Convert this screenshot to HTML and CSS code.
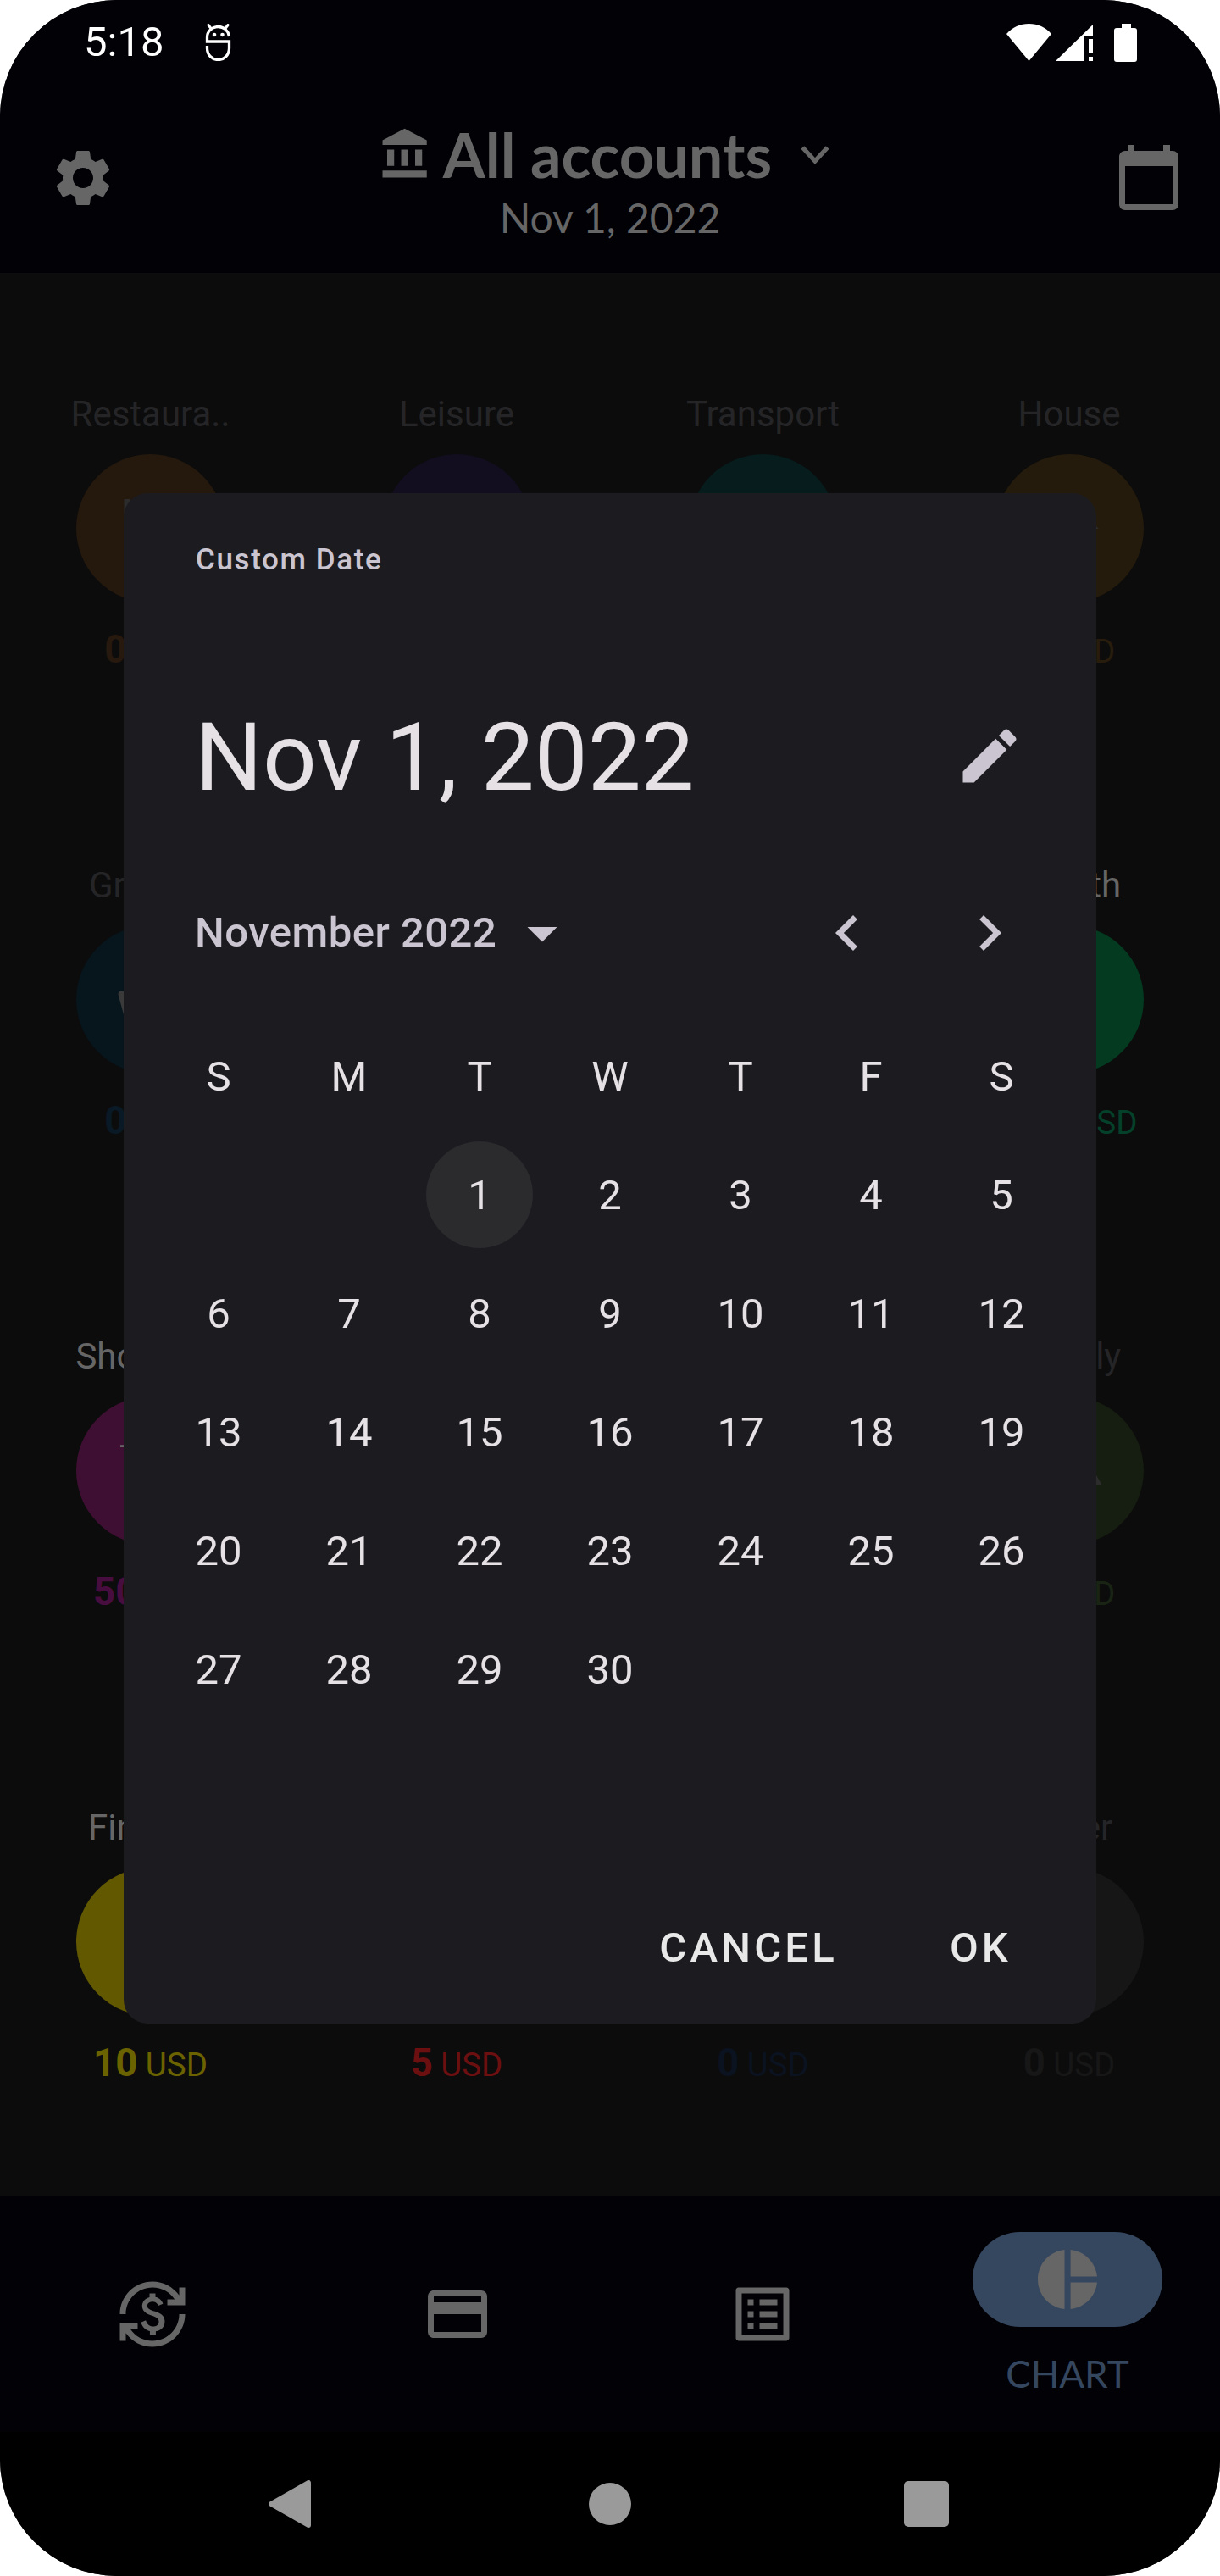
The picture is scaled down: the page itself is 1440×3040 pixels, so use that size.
FILE: index.html
```html
<!DOCTYPE html>
<html lang="en">
<head>
<meta charset="utf-8">
<title>Custom Date</title>
<link rel="stylesheet" href="styles.css">
</head>
<body>
<div class="phone">
  <header class="top">
    <div class="status">
      <span class="time">5:18</span>
      <svg class="android" viewBox="0 0 31 44"><path class="android-line" d="M28.5 15C27.5 8 22 3.5 15.5 3.5 8 3.5 2.5 9 2.5 16v5h26v8c0 8-6 13.5-13 13.500S2.500 37 2.500 29v-3"/><path class="android-line thin" d="M4 1.500l3 4M27 1.500l-3 4"/><circle cx="11" cy="13" r="2.300"/><circle cx="20.500" cy="13" r="2.300"/></svg>
      <div class="status-right">
        <svg class="wifi" viewBox="0 0 53 44"><path d="M26.500 44 0 12C7 4 16 0 26.500 0S46 4 53 12z"/></svg>
        <svg class="signal" viewBox="0 0 44 43"><path d="M44 0v14H33v29H0z"/><rect x="39" y="17" width="5" height="17"/><rect x="39" y="38" width="5" height="5"/></svg>
        <svg class="battery" viewBox="0 0 27 45"><path d="M9 0h11v5H9z"/><rect y="5" width="27" height="40" rx="3"/></svg>
      </div>
    </div>
    <div class="appbar">
      <svg class="gear" viewBox="0 0 24 24"><path d="M19.140 12.940c.04-.3.060-.61.060-.94 0-.32-.020-.64-.070-.94l2.030-1.580c.18-.14.230-.41.120-.61l-1.920-3.320c-.12-.22-.37-.29-.59-.22l-2.390.96c-.5-.38-1.030-.7-1.620-.94l-.36-2.540c-.04-.24-.24-.41-.48-.41h-3.840c-.24 0-.43.170-.47.410l-.36 2.540c-.59.24-1.130.57-1.620.94l-2.390-.96c-.22-.080-.47 0-.59.22L2.740 8.870c-.12.21-.080.47.120.61l2.030 1.580c-.05.3-.09.63-.09.94s.020.64.070.94l-2.030 1.580c-.18.14-.23.41-.12.61l1.920 3.320c.12.22.37.29.59.22l2.390-.96c.5.38 1.030.7 1.620.94l.36 2.540c.05.24.24.41.48.41h3.840c.24 0 .44-.17.47-.41l.36-2.540c.59-.24 1.130-.56 1.620-.94l2.390.96c.22.080.47 0 .59-.22l1.920-3.320c.12-.22.070-.47-.12-.61l-2.010-1.580zM12 15.600c-1.980 0-3.600-1.620-3.600-3.600s1.620-3.600 3.600-3.600 3.600 1.620 3.600 3.600-1.620 3.600-3.600 3.600z"/></svg>
      <div class="titles">
        <div class="title-row">
          <svg class="bank" viewBox="0 0 24 24"><path d="M4 10v7h3v-7H4zm6 0v7h3v-7h-3zM2 22h19v-3H2v3zm14-12v7h3v-7h-3zm-4.500-9L2 6v2h19V6l-9.500-5z"/></svg>
          <span class="title">All accounts</span>
          <svg class="expand" viewBox="0 0 24 24"><path d="M6.500 9l5.500 6 5.500-6"/></svg>
        </div>
        <div class="subtitle">Nov 1, 2022</div>
      </div>
      <svg class="cal" viewBox="0 0 70 77"><path fill-rule="evenodd" d="M10 0h7v7h35V0h8v7h3c4 0 7 3 7 7v56c0 4-3 7-7 7H7c-4 0-7-3-7-7V14c0-4 3-7 7-7h3zM7 25v45h56V25z"/></svg>
    </div>
  </header>

  <main class="cats">
    <div class="cat">
      <div class="cat-label dim">Restaura..</div>
      <div class="circle c-rest"><svg class="cat-icon i1" viewBox="0 0 24 24"><path d="M11 9H9V2H7v7H5V2H3v7c0 2.120 1.660 3.840 3.750 3.970V22h2.500v-9.030C11.340 12.840 13 11.120 13 9V2h-2v7zm5-3v8h2.500v8H21V2c-2.760 0-5 2.240-5 4z"/></svg></div>
      <div class="amount a-rest"><b>0</b> USD</div>
    </div>
    <div class="cat">
      <div class="cat-label dim">Leisure</div>
      <div class="circle c-leis"></div>
      <div class="amount a-leis"><b>0</b> USD</div>
    </div>
    <div class="cat">
      <div class="cat-label dim">Transport</div>
      <div class="circle c-tran"></div>
      <div class="amount a-tran"><b>0</b> USD</div>
    </div>
    <div class="cat">
      <div class="cat-label dim">House</div>
      <div class="circle c-hous"><svg class="cat-icon i1" viewBox="0 0 24 24"><path d="M10 20v-6h4v6h5v-8h3L12 3 2 12h3v8h5z"/></svg></div>
      <div class="amount a-hous"><b>0</b> USD</div>
    </div>

    <div class="cat">
      <div class="cat-label dim">Grocery</div>
      <div class="circle c-groc"><svg class="cat-icon i2" viewBox="0 0 24 24"><path d="M17.210 9l-4.380-6.560c-.19-.28-.51-.42-.83-.42-.32 0-.64.140-.83.430L6.790 9H2c-.55 0-1 .45-1 1 0 .09.010.18.040.27l2.540 9.270c.23.840 1 1.460 1.920 1.460h13c.92 0 1.690-.62 1.930-1.460l2.540-9.270L23 10c0-.55-.45-1-1-1h-4.790z"/></svg></div>
      <div class="amount a-groc"><b>0</b> USD</div>
    </div>
    <div class="cat">
      <div class="cat-label dim">Bills</div>
      <div class="circle c-leis"></div>
      <div class="amount a-leis"><b>0</b> USD</div>
    </div>
    <div class="cat">
      <div class="cat-label dim">Car</div>
      <div class="circle c-tran"></div>
      <div class="amount a-tran"><b>0</b> USD</div>
    </div>
    <div class="cat">
      <div class="cat-label bright">Health</div>
      <div class="circle c-heal"><svg class="cat-icon i3" viewBox="0 0 24 24"><path d="M19 3H5c-1.100 0-1.990.9-1.990 2L3 19c0 1.100.9 2 2 2h14c1.100 0 2-.9 2-2V5c0-1.100-.9-2-2-2zm-1 11h-4v4h-4v-4H6v-4h4V6h4v4h4v4z"/></svg></div>
      <div class="amount a-heal"><b>100</b> USD</div>
    </div>

    <div class="cat">
      <div class="cat-label bright">Shopping</div>
      <div class="circle c-shop"><svg class="cat-icon i3" viewBox="0 0 24 24"><rect x="1.700" y="3.200" width="20.600" height=".8"/></svg></div>
      <div class="amount a-shop"><b>50</b> USD</div>
    </div>
    <div class="cat">
      <div class="cat-label dim">Gifts</div>
      <div class="circle c-leis"></div>
      <div class="amount a-leis"><b>0</b> USD</div>
    </div>
    <div class="cat">
      <div class="cat-label dim">Travel</div>
      <div class="circle c-tran"></div>
      <div class="amount a-tran"><b>0</b> USD</div>
    </div>
    <div class="cat">
      <div class="cat-label dim">Family</div>
      <div class="circle c-fami"><svg class="cat-icon i1" viewBox="0 0 24 24"><path d="M18 8l5 8.600H13z"/></svg></div>
      <div class="amount a-fami"><b>0</b> USD</div>
    </div>

    <div class="cat">
      <div class="cat-label bright">Finance</div>
      <div class="circle c-fina"><svg class="cat-icon i3" viewBox="0 0 24 24"><circle cx="12" cy="12" r="9"/></svg></div>
      <div class="amount a-fina"><b>10</b> USD</div>
    </div>
    <div class="cat">
      <div class="cat-label bright">Bills</div>
      <div class="circle c-bill"></div>
      <div class="amount a-bill"><b>5</b> USD</div>
    </div>
    <div class="cat">
      <div class="cat-label dim">Pets</div>
      <div class="circle c-leis"></div>
      <div class="amount a-blue"><b>0</b> USD</div>
    </div>
    <div class="cat">
      <div class="cat-label dim">Other</div>
      <div class="circle c-othe"></div>
      <div class="amount a-othe"><b>0</b> USD</div>
    </div>
  </main>

  <nav class="tabs">
    <div class="tab">
      <svg class="tab-icon" viewBox="0 0 24 24"><path d="M12.890 11.100c-1.780-.59-2.640-.96-2.640-1.900 0-1.020 1.110-1.390 1.810-1.390 1.310 0 1.790.99 1.900 1.340l1.580-.67c-.15-.45-.82-1.920-2.540-2.240V5h-2v1.260c-2.480.56-2.490 2.860-2.490 2.960 0 2.270 2.250 2.910 3.350 3.310 1.580.56 2.280 1.070 2.280 2.030 0 1.130-1.050 1.610-1.980 1.610-1.820 0-2.340-1.870-2.400-2.090l-1.660.67c.63 2.190 2.280 2.780 3.020 2.960V19h2v-1.240c.52-.09 3.020-.59 3.020-3.220.010-1.390-.6-2.610-3.250-3.440zM3 21H1v-6h6v2H4.520c1.610 2.410 4.360 4 7.480 4 4.970 0 9-4.030 9-9h2c0 6.080-4.920 11-11 11-3.720 0-7.010-1.850-9-4.670V21zm-2-9C1 5.920 5.920 1 12 1c3.720 0 7.010 1.850 9 4.670V3h2v6h-6V7h2.480C17.870 4.590 15.120 3 12 3c-4.970 0-9 4.030-9 9H1z"/></svg>
    </div>
    <div class="tab">
      <svg class="tab-icon" viewBox="0 0 24 24"><path d="M20 4H4c-1.110 0-1.990.89-1.990 2L2 18c0 1.110.89 2 2 2h16c1.110 0 2-.89 2-2V6c0-1.110-.89-2-2-2zm0 14H4v-6h16v6zm0-10H4V6h16v2z"/></svg>
    </div>
    <div class="tab">
      <svg class="tab-icon" viewBox="0 0 24 24"><path d="M19 5v14H5V5h14m1.100-2H3.900c-.5 0-.9.4-.9.9v16.200c0 .4.4.9.9.9h16.200c.4 0 .9-.5.9-.9V3.900c0-.5-.5-.9-.9-.9zM11 7h6v2h-6V7zm0 4h6v2h-6v-2zm0 4h6v2h-6zM7 7h2v2H7zm0 4h2v2H7zm0 4h2v2H7z"/></svg>
    </div>
    <div class="tab tab-active">
      <div class="pill">
        <svg class="tab-icon" viewBox="0 0 24 24"><path d="M11 2v20c-5.070-.5-9-4.790-9-10s3.930-9.500 9-10zm2.030 0v8.990H22c-.47-4.740-4.240-8.520-8.970-8.990zm0 11.010V22c4.740-.47 8.500-4.250 8.970-8.990h-8.970z"/></svg>
      </div>
      <div class="tab-label">CHART</div>
    </div>
  </nav>

  <div class="sysnav">
    <svg class="nav-back" viewBox="0 0 50 56"><path d="M47 3v50L3 28z"/></svg>
    <span class="nav-home"></span>
    <span class="nav-recent"></span>
  </div>

  <section class="dialog">
    <div class="dlg-title">Custom Date</div>
    <div class="dlg-head">
      <span class="dlg-date">Nov 1, 2022</span>
      <svg class="dlg-icon edit" viewBox="0 0 24 24"><path d="M3 17.250V21h3.750L17.810 9.940l-3.750-3.750L3 17.250zM20.710 7.040c.39-.39.39-1.020 0-1.410l-2.340-2.340c-.39-.39-1.020-.39-1.410 0l-1.830 1.830 3.750 3.750 1.830-1.830z"/></svg>
    </div>
    <div class="dlg-month">
      <span class="month-name">November 2022</span>
      <svg class="dlg-icon drop" viewBox="0 0 24 24"><path d="M7 10l5 5 5-5z"/></svg>
      <svg class="dlg-icon prev" viewBox="0 0 24 24"><path d="M15.410 7.410L14 6l-6 6 6 6 1.410-1.410L10.830 12z"/></svg>
      <svg class="dlg-icon next" viewBox="0 0 24 24"><path d="M10 6L8.590 7.410 13.170 12l-4.580 4.590L10 18l6-6z"/></svg>
    </div>
    <div class="days">
      <span>S</span><span>M</span><span>T</span><span>W</span><span>T</span><span>F</span><span>S</span>
      <span></span><span></span><span><i class="today">1</i></span><span>2</span><span>3</span><span>4</span><span>5</span>
      <span>6</span><span>7</span><span>8</span><span>9</span><span>10</span><span>11</span><span>12</span>
      <span>13</span><span>14</span><span>15</span><span>16</span><span>17</span><span>18</span><span>19</span>
      <span>20</span><span>21</span><span>22</span><span>23</span><span>24</span><span>25</span><span>26</span>
      <span>27</span><span>28</span><span>29</span><span>30</span>
    </div>
    <div class="dlg-actions">
      <span class="btn">CANCEL</span>
      <span class="btn">OK</span>
    </div>
  </section>
</div>
</body>
</html>
```

FILE: styles.css
```css
* { box-sizing: border-box; }
html, body { margin: 0; padding: 0; background: #fff; }
body { font-family: Roboto, "Noto Sans", sans-serif; }
svg { display: block; flex: none; }

.phone {
  position: relative;
  width: 1440px;
  height: 3040px;
  border-radius: 138px;
  overflow: hidden;
  display: flex;
  flex-direction: column;
  background: #010106;
}

/* top */
.top { height: 322px; flex: none; background: #010106; }
.status {
  height: 100px;
  display: flex;
  align-items: center;
  padding: 0 98px 0 99px;
  color: #fff;
}
.time { font-size: 49px; line-height: 100px; width: 143px; }
.android { width: 31px; height: 44px; fill: #fff; }
.android-line { fill: none; stroke: #fff; stroke-width: 3.3; }
.android-line.thin { stroke-width: 3; stroke-linecap: round; }
.status-right { margin-left: auto; display: flex; align-items: center; fill: #fff; }
.wifi { width: 53px; height: 44px; margin-right: 5px; }
.signal { width: 44px; height: 43px; margin-right: 25px; }
.battery { width: 27px; height: 45px; }

.appbar {
  height: 222px;
  display: grid;
  grid-template-columns: 1fr auto 1fr;
  align-items: start;
  padding: 0 49px;
}
.gear { width: 80px; height: 80px; fill: #666; margin: 70px 0 0 9px; }
.cal { width: 70px; height: 77px; fill: #666; justify-self: end; margin-top: 71px; }
.titles { display: flex; flex-direction: column; align-items: center; margin-top: 42px; }
.title-row { display: flex; align-items: center; height: 80px; }
.bank { width: 66px; height: 66px; fill: #666; margin-right: 11px; }
.title {
  font-family: Lato, "Noto Sans", sans-serif;
  font-weight: 700;
  font-size: 72px;
  line-height: 80px;
  color: #666;
  margin-right: 19px;
}
.expand { width: 64px; height: 64px; fill: none; stroke: #666; stroke-width: 2; }
.subtitle {
  font-family: Lato, "Noto Sans", sans-serif;
  font-size: 48px;
  line-height: 60px;
  color: #666;
  margin-top: 5px;
}

/* categories */
.cats {
  flex: 1;
  background: #0c0c0c;
  display: grid;
  grid-template-columns: repeat(4, 210px);
  justify-content: space-between;
  align-content: start;
  row-gap: 223px;
  padding: 142px 73px 0 72.5px;
}
.cat { display: flex; flex-direction: column; align-items: center; }
.cat-label { font-size: 42px; line-height: 50px; white-space: nowrap; }
.dim { color: #252527; }
.bright { color: #666; }
.circle {
  width: 175px;
  height: 175px;
  border-radius: 50%;
  margin-top: 22px;
  display: flex;
  align-items: center;
  justify-content: center;
}
.cat-icon { width: 84px; height: 84px; }
.i1 { fill: #2c2c2c; }
.i2 { fill: #3a3a3a; }
.i3 { fill: #666; }
.amount { font-size: 38.5px; line-height: 56px; margin-top: 28px; white-space: nowrap; }
.amount b { font-size: 45.5px; font-weight: 700; }
.c-rest { background: #25190e; }
.c-leis { background: #120e20; }
.c-tran { background: #071c1c; }
.c-hous { background: #241b0c; }
.c-groc { background: #07151d; }
.c-heal { background: #033a20; }
.c-shop { background: #3f0f33; }
.c-fami { background: #161d11; }
.c-fina { background: #615800; }
.c-bill { background: #5e0f0f; }
.c-othe { background: #151615; }
.a-rest { color: #28190e; }
.a-leis { color: #120e20; }
.a-tran { color: #071c1c; }
.a-hous { color: #281c0c; }
.a-groc { color: #091925; }
.a-heal { color: #05402a; }
.a-shop { color: #480d3f; }
.a-fami { color: #1a2414; }
.a-fina { color: #6b6200; }
.a-bill { color: #6b0f10; }
.a-blue { color: #0b1220; }
.a-othe { color: #171717; }

/* bottom nav */
.tabs {
  height: 278px;
  flex: none;
  display: grid;
  grid-template-columns: repeat(4, 1fr);
  background: #010106;
}
.tab { display: flex; flex-direction: column; align-items: center; justify-content: center; }
.tab-icon { width: 84px; height: 84px; fill: #666; }
.pill {
  width: 224px;
  height: 112px;
  border-radius: 56px;
  background: #35475f;
  display: flex;
  align-items: center;
  justify-content: center;
}
.tab-label {
  font-family: Lato, "Noto Sans", sans-serif;
  font-size: 44px;
  line-height: 58px;
  margin-top: 26px;
  margin-bottom: -2px;
  color: #35475f;
}

/* system nav */
.sysnav {
  height: 170px;
  flex: none;
  background: #000;
  display: flex;
  align-items: center;
  padding-left: 317px;
}
.nav-back { width: 50px; height: 56px; fill: #9a9a9a; stroke: #9a9a9a; stroke-width: 6; stroke-linejoin: round; }
.nav-home { width: 50px; height: 50px; border-radius: 50%; background: #9a9a9a; margin-left: 328px; }
.nav-recent { width: 53px; height: 54px; border-radius: 5px; background: #9a9a9a; margin-left: 322px; }

/* dialog */
.dialog {
  position: absolute;
  left: 146px;
  top: 582px;
  width: 1148px;
  height: 1806px;
  border-radius: 28px;
  background: #1c1c20;
  display: flex;
  flex-direction: column;
  padding: 54px 0 47px;
}
.dlg-title {
  font-size: 35px;
  line-height: 50px;
  font-weight: 500;
  letter-spacing: 1.6px;
  color: #cac5d0;
  padding-left: 85px;
}
.dlg-head {
  display: flex;
  align-items: center;
  justify-content: space-between;
  height: 120px;
  margin-top: 148px;
  padding: 0 84px;
}
.dlg-date { font-size: 112px; line-height: 120px; color: #e6e1e5; }
.dlg-icon { width: 84px; height: 84px; fill: #cac5d0; }
.edit { margin-top: -4px; }
.dlg-month {
  display: flex;
  align-items: center;
  height: 84px;
  margin-top: 105px;
  padding-left: 84px;
}
.month-name {
  font-size: 49px;
  line-height: 84px;
  font-weight: 500;
  letter-spacing: .5px;
  color: #cac5d0;
  width: 353px;
  white-space: nowrap;
}
.drop { margin-left: 15px; }
.prev { margin-left: auto; }
.next { margin-left: 84px; margin-right: 84px; }

.days {
  display: grid;
  grid-template-columns: repeat(7, 154px);
  grid-auto-rows: 140px;
  justify-content: center;
  margin-top: 57px;
  font-size: 49px;
  color: #e6e1e5;
}
.days span { display: flex; align-items: center; justify-content: center; }
.today {
  width: 126px;
  height: 126px;
  border-radius: 50%;
  background: #2b2b2e;
  font-style: normal;
  display: flex;
  align-items: center;
  justify-content: center;
}
.dlg-actions {
  margin-top: auto;
  display: flex;
  justify-content: flex-end;
  gap: 132px;
  padding-right: 100px;
}
.btn {
  font-size: 49px;
  line-height: 84px;
  font-weight: 500;
  letter-spacing: 4.2px;
  color: #e8e8e8;
}
```
